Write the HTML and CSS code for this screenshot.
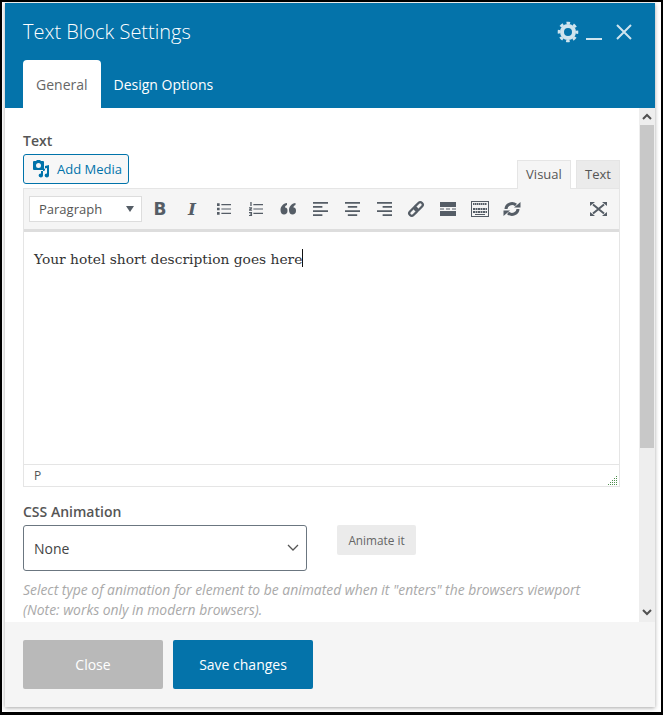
FILE: index.html
```html
<!DOCTYPE html>
<html lang="en">
<head>
    <meta charset="UTF-8">
    <title>Text Block Settings</title>
    <link rel="stylesheet" href="styles.css">
</head>
<body>

<div class="modal">
    <div class="modal-header">
        <div class="title-row">
            <div class="title">Text Block Settings</div>
            <div class="window-icons">
                <svg class="gear" width="22" height="22" viewBox="0 0 22 22">
                    <circle cx="11" cy="11" r="6" fill="none" stroke="#cfe4ee" stroke-width="4"/>
                    <circle cx="11" cy="11" r="9" fill="none" stroke="#cfe4ee" stroke-width="2.6" stroke-dasharray="3.6 3.47" stroke-dashoffset="1.8"/>
                </svg>
                <svg class="minimize" width="16" height="16" viewBox="0 0 16 16">
                    <rect x="0" y="14" width="16" height="2" fill="#cfe4ee"/>
                </svg>
                <svg class="close-x" width="16" height="16" viewBox="0 0 16 16">
                    <path d="M1 1L15 15M15 1L1 15" stroke="#cfe4ee" stroke-width="2" fill="none"/>
                </svg>
            </div>
        </div>
        <div class="tabs">
            <div class="tab active">General</div>
            <div class="tab">Design Options</div>
        </div>
    </div>

    <div class="modal-body">
        <div class="content">
            <div class="field-label">Text</div>
            <div class="editor-top">
                <button class="add-media">
                    <svg width="18" height="18" viewBox="0 0 18 18">
                        <path fill="#0073aa" d="M2 1h2l1-1h3l1 1h2a1 1 0 0 1 1 1v7a1 1 0 0 1-1 1H2a1 1 0 0 1-1-1V2a1 1 0 0 1 1-1zm4.500 2a2.500 2.500 0 1 0 0 5 2.500 2.500 0 0 0 0-5z"/>
                        <path fill="#0073aa" d="M17 5v10.500a2.200 2 0 1 1-2-2V8l-4 1v6.500a2.200 2 0 1 1-2-2V11h2.500a1.500 1.500 0 0 0 1.500-1.500V6z"/>
                    </svg>
                    Add Media
                </button>
                <div class="editor-tabs">
                    <div class="editor-tab active">Visual</div>
                    <div class="editor-tab">Text</div>
                </div>
            </div>

            <div class="editor">
                <div class="toolbar">
                    <div class="format-select">Paragraph<span class="caret"></span></div>
                    <div class="tool text-tool bold">B</div>
                    <div class="tool text-tool italic">I</div>
                    <div class="tool">
                        <svg width="14" height="14" viewBox="0 0 16 16"><path d="M5 3h11M5 8h11M5 13h11" stroke="#555d66" stroke-width="1.300"/><path d="M0 1.500h3v3H0zM0 6.500h3v3H0zM0 11.500h3v3H0z" fill="#555d66"/></svg>
                    </div>
                    <div class="tool">
                        <svg width="14" height="14" viewBox="0 0 16 16"><path d="M5 3h11M5 8h11M5 13h11" stroke="#555d66" stroke-width="1.300"/><path d="M1.500 0h1.500v4.500H1.500zM0 6h3.500v1.500L2 8.500h1.500V10H0V8.500L2 7.500H0zM0 11.500h3.500V16H0v-1.200h2v-.500H1v-1h1v-.500H0z" fill="#555d66"/></svg>
                    </div>
                    <div class="tool">
                        <svg width="16" height="14" viewBox="0 0 16 14"><path fill="#555d66" d="M7 1v2C5.500 3.500 5 4.500 5 5.500c2 0 2.500 1.500 2.500 3.500S6 12.500 4 12.500 .5 11 .5 8C.5 4.500 3 1.500 7 1zM15.500 1v2C14 3.500 13.500 4.500 13.500 5.500c2 0 2.500 1.500 2.500 3.500s-1.500 3.500-3.500 3.500S9 11 9 8C9 4.500 11.500 1.500 15.500 1z"/></svg>
                    </div>
                    <div class="tool">
                        <svg width="15" height="14" viewBox="0 0 16 16" preserveAspectRatio="none"><path d="M0 0h16v2H0zM0 4.700h10v2H0zM0 9.300h16v2H0zM0 14h10v2H0z" fill="#555d66"/></svg>
                    </div>
                    <div class="tool">
                        <svg width="15" height="14" viewBox="0 0 16 16" preserveAspectRatio="none"><path d="M0 0h16v2H0zM3 4.700h10v2H3zM0 9.300h16v2H0zM3 14h10v2H3z" fill="#555d66"/></svg>
                    </div>
                    <div class="tool">
                        <svg width="15" height="14" viewBox="0 0 16 16" preserveAspectRatio="none"><path d="M0 0h16v2H0zM6 4.700h10v2H6zM0 9.300h16v2H0zM6 14h10v2H6z" fill="#555d66"/></svg>
                    </div>
                    <div class="tool">
                        <svg width="18" height="18" viewBox="0 0 18 18"><g fill="none" stroke="#555d66" stroke-width="2.300" transform="rotate(-45 9 9)"><rect x="0.500" y="6.500" width="9.500" height="5" rx="2.500"/><rect x="8" y="6.500" width="9.500" height="5" rx="2.500"/></g></svg>
                    </div>
                    <div class="tool">
                        <svg width="16" height="14" viewBox="0 0 16 14"><path d="M0 0h16v5H0zM0 9h16v5H0z" fill="#555d66"/><path d="M0 7h4M6 7h4M12 7h4" stroke="#555d66" stroke-width="1"/></svg>
                    </div>
                    <div class="tool">
                        <svg width="18" height="16" viewBox="0 0 18 16"><rect x=".5" y=".5" width="17" height="15" fill="none" stroke="#555d66"/><path d="M2 3h14" stroke="#555d66" stroke-width="2" stroke-dasharray="1.500 .5"/><path d="M2 8h14M2 11h14" stroke="#555d66" stroke-width="2" stroke-dasharray="2 .5"/><path d="M4 13.500h10" stroke="#555d66" stroke-width="1"/></svg>
                    </div>
                    <div class="tool">
                        <svg width="18" height="16" viewBox="0 0 18 16"><path d="M3 8a6 5.500 0 0 1 10-4M15 8a6 5.500 0 0 1-10 4" fill="none" stroke="#555d66" stroke-width="3"/><path d="M11 6.500h6.500V1zM7 9.500H.5V15z" fill="#555d66"/></svg>
                    </div>
                    <div class="tool fullscreen">
                        <svg width="17" height="14" viewBox="0 0 17 14"><path d="M3 2.500l11 9M14 2.500l-11 9" stroke="#555d66" stroke-width="2"/><path d="M0 0h5L0 4zM17 0h-5l5 4zM0 14h5l-5-4zM17 14h-5l5-4z" fill="#555d66"/></svg>
                    </div>
                </div>
                <div class="editor-area">
                    <span class="editor-text">Your hotel short description goes here</span><span class="cursor"></span>
                </div>
                <div class="statusbar">
                    <span>P</span>
                    <svg class="grip" width="10" height="10" viewBox="0 0 10 10">
                        <path d="M9 1h1v1H9zM9 3h1v1H9zM9 5h1v1H9zM9 7h1v1H9zM9 9h1v1H9zM7 3h1v1H7zM7 5h1v1H7zM7 7h1v1H7zM7 9h1v1H7zM5 5h1v1H5zM5 7h1v1H5zM5 9h1v1H5zM3 7h1v1H3zM3 9h1v1H3zM1 9h1v1H1z" fill="#4f8f4f"/>
                    </svg>
                </div>
            </div>

            <div class="field-label animation-label">CSS Animation</div>
            <div class="animation-row">
                <div class="animation-select">
                    None
                    <svg width="12" height="8" viewBox="0 0 12 8"><path d="M1 1l5 5 5-5" fill="none" stroke="#555" stroke-width="1.300"/></svg>
                </div>
                <button class="animate-btn">Animate it</button>
            </div>
            <div class="hint">Select type of animation for element to be animated when it "enters" the browsers viewport<br>(Note: works only in modern browsers).</div>
        </div>

        <div class="scrollbar">
            <svg width="10" height="7" viewBox="0 0 10 7"><path d="M1 6l4-4 4 4" fill="none" stroke="#505050" stroke-width="2"/></svg>
            <div class="scroll-track"><div class="scroll-thumb"></div></div>
            <svg width="10" height="7" viewBox="0 0 10 7"><path d="M1 1l4 4 4-4" fill="none" stroke="#505050" stroke-width="2"/></svg>
        </div>
    </div>

    <div class="modal-footer">
        <button class="btn btn-close">Close</button>
        <button class="btn btn-save">Save changes</button>
    </div>
</div>

</body>
</html>
```

FILE: styles.css
```css
* {
    box-sizing: border-box;
}
html, body {
    height: 100%;
}
body {
    margin: 0;
    background-color: #fff;
    border-style: solid;
    border-color: #000;
    border-width: 2px 2px 3px 2px;
    padding: 1px 0 0 3px;
    font-family: "Open Sans", sans-serif;
    font-size: 14px;
    color: #555;
    overflow: hidden;
}
button {
    font-family: "Open Sans", sans-serif;
    cursor: pointer;
}
.modal {
    width: 650px;
    height: 704px;
    display: flex;
    flex-direction: column;
    box-shadow: 0 1px 4px rgba(0, 0, 0, 0.35);
}
.modal-header {
    background-color: #0473aa;
    height: 105px;
    padding: 0 0 0 18px;
    display: flex;
    flex-direction: column;
    justify-content: space-between;
}
.title-row {
    display: flex;
    justify-content: space-between;
    align-items: center;
    padding: 15px 23px 0 0;
}
.title {
    font-size: 20px;
    font-weight: 300;
    color: #fff;
    line-height: 27px;
}
.window-icons {
    display: flex;
    align-items: center;
}
.gear {
    margin-right: 7px;
}
.minimize {
    margin-right: 14px;
}
.tabs {
    display: flex;
}
.tab {
    height: 48px;
    padding: 15px 13px 0;
    font-size: 14px;
    line-height: 20px;
    color: #fff;
}
.tab.active {
    background-color: #fff;
    color: #666;
    border-radius: 4px 4px 0 0;
}
.modal-body {
    height: 514px;
    display: flex;
    background-color: #fff;
    overflow: hidden;
}
.content {
    width: 634px;
    padding: 23px 19px 0 18px;
}
.field-label {
    font-weight: 600;
    font-size: 14px;
    line-height: 20px;
    color: #555;
}
.editor-top {
    display: flex;
    justify-content: space-between;
    align-items: flex-end;
    margin-top: 3px;
}
.add-media {
    width: 106px;
    height: 30px;
    margin-bottom: 4px;
    padding: 0 0 0 8px;
    display: flex;
    align-items: center;
    gap: 7px;
    background-color: #f7f7f7;
    border: 1px solid #0073aa;
    border-radius: 3px;
    color: #0073aa;
    font-size: 13px;
}
.editor-tabs {
    display: flex;
    gap: 5px;
}
.editor-tab {
    height: 28px;
    padding: 4px 8px 0;
    font-size: 13px;
    line-height: 18px;
    background-color: #ebebeb;
    border: 1px solid #e5e5e5;
    border-bottom: none;
    color: #555;
}
.editor-tab.active {
    background-color: #f5f5f5;
    width: 54px;
    height: 29px;
    margin-bottom: -1px;
    position: relative;
}
.editor {
    border: 1px solid #e5e5e5;
    height: 299px;
    display: flex;
    flex-direction: column;
}
.toolbar {
    height: 43px;
    flex: none;
    display: flex;
    align-items: center;
    padding: 0 5px 1px;
    background-color: #f5f5f5;
    border-bottom: 3px solid #ddd;
}
.format-select {
    width: 113px;
    height: 26px;
    margin-right: 2px;
    padding-left: 9px;
    display: flex;
    align-items: center;
    justify-content: space-between;
    background-color: #fff;
    border: 1px solid #ddd;
    font-size: 13px;
    color: #555;
}
.caret {
    width: 0;
    height: 0;
    margin-right: 7px;
    border-left: 4px solid transparent;
    border-right: 4px solid transparent;
    border-top: 6px solid #555d66;
}
.tool {
    width: 32px;
    height: 26px;
    display: flex;
    align-items: center;
    justify-content: center;
}
.text-tool {
    font-family: "DejaVu Sans", sans-serif;
    font-size: 17px;
    font-weight: bold;
    color: #555d66;
}
.italic {
    font-style: italic;
    font-family: "DejaVu Serif", serif;
}
.fullscreen {
    margin-left: auto;
}
.editor-area {
    flex: 1;
    padding: 17px 10px 0;
    background-color: #fff;
    display: flex;
    align-items: flex-start;
}
.editor-text {
    font-family: "DejaVu Serif", serif;
    font-size: 13.800px;
    line-height: 20px;
    color: #333;
}
.cursor {
    width: 1px;
    height: 18px;
    background-color: #111;
}
.statusbar {
    height: 22px;
    flex: none;
    padding: 0 2px 0 10px;
    display: flex;
    align-items: center;
    justify-content: space-between;
    border-top: 1px solid #e5e5e5;
    font-size: 12px;
    color: #555;
}
.grip {
    margin-top: 8px;
}
.animation-label {
    margin-top: 15px;
}
.animation-row {
    display: flex;
    gap: 30px;
    margin-top: 3px;
}
.animation-select {
    width: 284px;
    height: 46px;
    padding: 0 7px 0 10px;
    display: flex;
    align-items: center;
    justify-content: space-between;
    border: 1px solid #6b7680;
    border-radius: 3px;
    font-size: 14px;
    color: #444;
}
.animate-btn {
    width: 79px;
    height: 30px;
    padding: 0;
    background-color: #ebebeb;
    border: none;
    border-radius: 2px;
    font-size: 11.800px;
    color: #666;
}
.hint {
    margin-top: 9px;
    font-size: 13.900px;
    font-style: italic;
    line-height: 20px;
    white-space: nowrap;
    color: #a9a9a9;
}
.scrollbar {
    width: 16px;
    background-color: #eee;
    display: flex;
    flex-direction: column;
    align-items: center;
    padding-top: 5px;
}
.scroll-track {
    flex: 1;
    width: 100%;
    padding: 5px 1px 0;
}
.scroll-thumb {
    height: 323px;
    background-color: #c8c8c8;
}
.scrollbar svg:last-child {
    margin-bottom: 6px;
}
.modal-footer {
    flex: 1;
    background-color: #f5f5f5;
    padding: 18px 18px 0;
    display: flex;
    align-items: flex-start;
    gap: 10px;
}
.btn {
    width: 140px;
    height: 49px;
    border: none;
    border-radius: 2px;
    font-size: 14px;
    color: #fff;
}
.btn-close {
    background-color: #b9b9b9;
}
.btn-save {
    background-color: #0473aa;
}
```
